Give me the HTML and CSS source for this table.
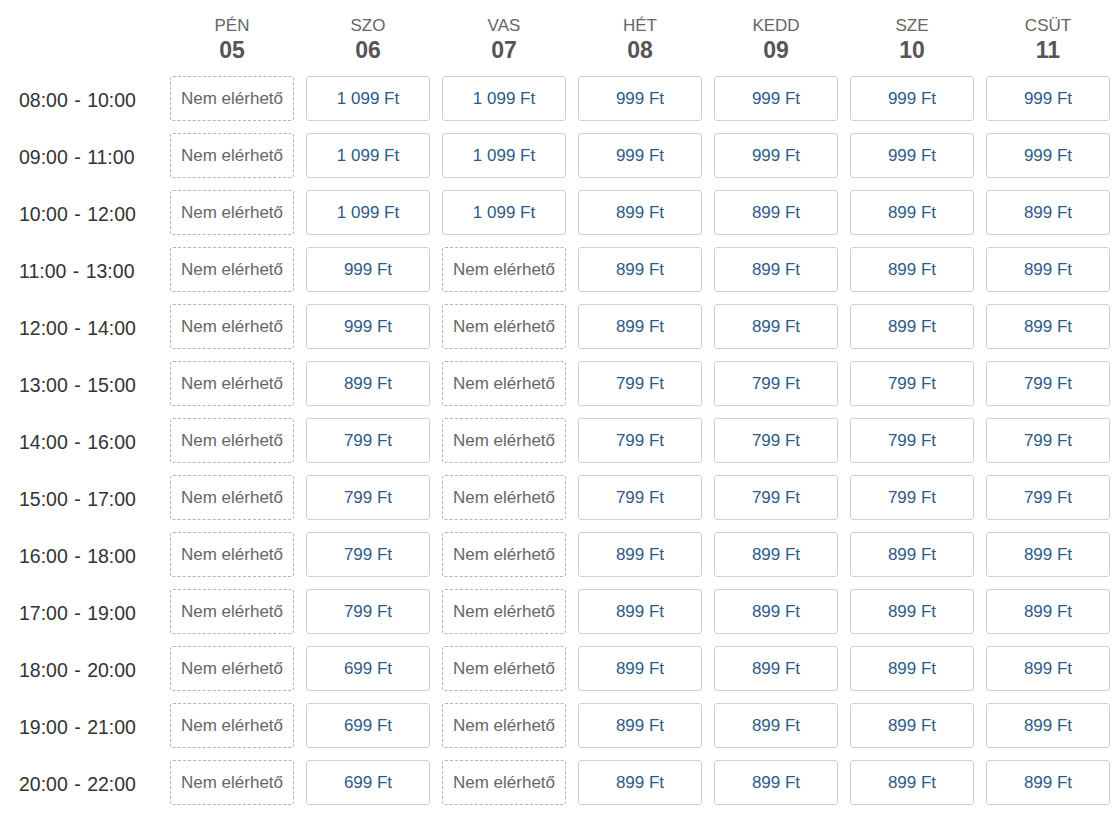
FILE: index.html
```html
<!DOCTYPE html>
<html lang="hu">
<head>
<meta charset="utf-8">
<title>Időpontok</title>
<link rel="stylesheet" href="styles.css">
</head>
<body>
<div class="schedule">
  <div class="corner"></div>
  <div class="day"><span class="dname">PÉN</span><span class="dnum">05</span></div>
  <div class="day"><span class="dname">SZO</span><span class="dnum">06</span></div>
  <div class="day"><span class="dname">VAS</span><span class="dnum">07</span></div>
  <div class="day"><span class="dname">HÉT</span><span class="dnum">08</span></div>
  <div class="day"><span class="dname">KEDD</span><span class="dnum">09</span></div>
  <div class="day"><span class="dname">SZE</span><span class="dnum">10</span></div>
  <div class="day"><span class="dname">CSÜT</span><span class="dnum">11</span></div>

  <div class="time">08:00 - 10:00</div>
  <div class="slot na">Nem elérhető</div>
  <div class="slot">1&nbsp;099 Ft</div>
  <div class="slot">1&nbsp;099 Ft</div>
  <div class="slot">999 Ft</div>
  <div class="slot">999 Ft</div>
  <div class="slot">999 Ft</div>
  <div class="slot">999 Ft</div>

  <div class="time">09:00 - 11:00</div>
  <div class="slot na">Nem elérhető</div>
  <div class="slot">1&nbsp;099 Ft</div>
  <div class="slot">1&nbsp;099 Ft</div>
  <div class="slot">999 Ft</div>
  <div class="slot">999 Ft</div>
  <div class="slot">999 Ft</div>
  <div class="slot">999 Ft</div>

  <div class="time">10:00 - 12:00</div>
  <div class="slot na">Nem elérhető</div>
  <div class="slot">1&nbsp;099 Ft</div>
  <div class="slot">1&nbsp;099 Ft</div>
  <div class="slot">899 Ft</div>
  <div class="slot">899 Ft</div>
  <div class="slot">899 Ft</div>
  <div class="slot">899 Ft</div>

  <div class="time">11:00 - 13:00</div>
  <div class="slot na">Nem elérhető</div>
  <div class="slot">999 Ft</div>
  <div class="slot na">Nem elérhető</div>
  <div class="slot">899 Ft</div>
  <div class="slot">899 Ft</div>
  <div class="slot">899 Ft</div>
  <div class="slot">899 Ft</div>

  <div class="time">12:00 - 14:00</div>
  <div class="slot na">Nem elérhető</div>
  <div class="slot">999 Ft</div>
  <div class="slot na">Nem elérhető</div>
  <div class="slot">899 Ft</div>
  <div class="slot">899 Ft</div>
  <div class="slot">899 Ft</div>
  <div class="slot">899 Ft</div>

  <div class="time">13:00 - 15:00</div>
  <div class="slot na">Nem elérhető</div>
  <div class="slot">899 Ft</div>
  <div class="slot na">Nem elérhető</div>
  <div class="slot">799 Ft</div>
  <div class="slot">799 Ft</div>
  <div class="slot">799 Ft</div>
  <div class="slot">799 Ft</div>

  <div class="time">14:00 - 16:00</div>
  <div class="slot na">Nem elérhető</div>
  <div class="slot">799 Ft</div>
  <div class="slot na">Nem elérhető</div>
  <div class="slot">799 Ft</div>
  <div class="slot">799 Ft</div>
  <div class="slot">799 Ft</div>
  <div class="slot">799 Ft</div>

  <div class="time">15:00 - 17:00</div>
  <div class="slot na">Nem elérhető</div>
  <div class="slot">799 Ft</div>
  <div class="slot na">Nem elérhető</div>
  <div class="slot">799 Ft</div>
  <div class="slot">799 Ft</div>
  <div class="slot">799 Ft</div>
  <div class="slot">799 Ft</div>

  <div class="time">16:00 - 18:00</div>
  <div class="slot na">Nem elérhető</div>
  <div class="slot">799 Ft</div>
  <div class="slot na">Nem elérhető</div>
  <div class="slot">899 Ft</div>
  <div class="slot">899 Ft</div>
  <div class="slot">899 Ft</div>
  <div class="slot">899 Ft</div>

  <div class="time">17:00 - 19:00</div>
  <div class="slot na">Nem elérhető</div>
  <div class="slot">799 Ft</div>
  <div class="slot na">Nem elérhető</div>
  <div class="slot">899 Ft</div>
  <div class="slot">899 Ft</div>
  <div class="slot">899 Ft</div>
  <div class="slot">899 Ft</div>

  <div class="time">18:00 - 20:00</div>
  <div class="slot na">Nem elérhető</div>
  <div class="slot">699 Ft</div>
  <div class="slot na">Nem elérhető</div>
  <div class="slot">899 Ft</div>
  <div class="slot">899 Ft</div>
  <div class="slot">899 Ft</div>
  <div class="slot">899 Ft</div>

  <div class="time">19:00 - 21:00</div>
  <div class="slot na">Nem elérhető</div>
  <div class="slot">699 Ft</div>
  <div class="slot na">Nem elérhető</div>
  <div class="slot">899 Ft</div>
  <div class="slot">899 Ft</div>
  <div class="slot">899 Ft</div>
  <div class="slot">899 Ft</div>

  <div class="time">20:00 - 22:00</div>
  <div class="slot na">Nem elérhető</div>
  <div class="slot">699 Ft</div>
  <div class="slot na">Nem elérhető</div>
  <div class="slot">899 Ft</div>
  <div class="slot">899 Ft</div>
  <div class="slot">899 Ft</div>
  <div class="slot">899 Ft</div>
</div>
</body>
</html>
```

FILE: styles.css
```css
html, body {
  margin: 0;
  padding: 0;
  background: #fff;
}

body {
  font-family: "Liberation Sans", Arial, sans-serif;
}

.schedule {
  display: grid;
  grid-template-columns: 139px repeat(7, 124px);
  grid-template-rows: 64px;
  grid-auto-rows: 45px;
  column-gap: 12px;
  row-gap: 12px;
  padding-left: 19px;
}

.day {
  display: flex;
  flex-direction: column;
  align-items: center;
  padding-top: 16px;
}

.dname {
  font-size: 17px;
  line-height: 20px;
  color: #666;
}

.dnum {
  font-size: 23px;
  line-height: 28px;
  font-weight: bold;
  color: #555;
}

.time {
  display: flex;
  align-items: center;
  padding-top: 3px;
  font-size: 19.5px;
  word-spacing: 1px;
  color: #333;
  white-space: nowrap;
}

.slot {
  box-sizing: border-box;
  display: flex;
  align-items: center;
  justify-content: center;
  border: 1px solid #cfcfcf;
  border-radius: 3px;
  font-size: 17px;
  color: #2d5b88;
  white-space: nowrap;
}

.slot.na {
  border: 1px dashed #b5b5b5;
  color: #666;
}
```
